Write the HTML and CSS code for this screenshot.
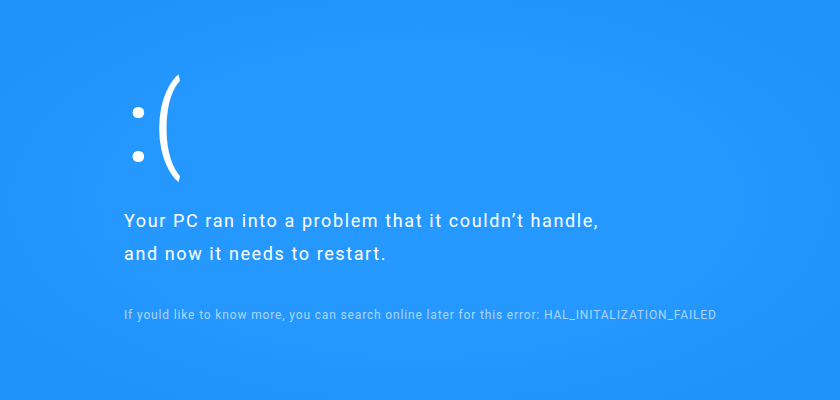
FILE: index.html
```html
<!DOCTYPE html>
<html lang="en">
<head>
<meta charset="utf-8">
<title>Your PC ran into a problem</title>
<link rel="stylesheet" href="styles.css">
</head>
<body>
<main class="screen">
  <div class="face"><span class="eyes">:</span><span class="mouth">(</span></div>
  <p class="message">Your PC ran into a problem that it couldn’t handle,<br>and now it needs to restart.</p>
  <p class="info">If yould like to know more, you can search online later for this error: HAL_INITALIZATION_FAILED</p>
</main>
</body>
</html>
```
FILE: styles.css
```css
html, body {
  margin: 0;
  padding: 0;
  height: 100%;
}
body {
  background: #2196fb;
}
.screen {
  box-sizing: border-box;
  width: 840px;
  height: 400px;
  padding: 58px 0 0 124px;
  background: radial-gradient(ellipse 60% 62% at 50% 50%, #2699ff 0%, #2598ff 60%, #1f92f9 100%);
  font-family: Roboto, "Liberation Sans", sans-serif;
  color: #ffffff;
  display: flex;
  flex-direction: column;
  align-items: flex-start;
}
.face {
  display: flex;
  align-items: center;
  height: 136px;
  font-family: Roboto, sans-serif;
  font-weight: 400;
  line-height: 1;
}
.eyes {
  font-size: 102px;
  margin-left: 2px;
}
.mouth {
  font-size: 103px;
  margin-left: 3px;
  margin-bottom: 7px;
  transform: scaleX(0.78);
  transform-origin: left center;
}
.message {
  margin: 10px 0 0;
  font-size: 18px;
  line-height: 33px;
  letter-spacing: 1.6px;
  font-weight: 400;
}
.info {
  margin: 37px 0 0;
  font-size: 12px;
  line-height: 16px;
  letter-spacing: 0.85px;
  color: rgba(255, 255, 255, 0.62);
}
```
